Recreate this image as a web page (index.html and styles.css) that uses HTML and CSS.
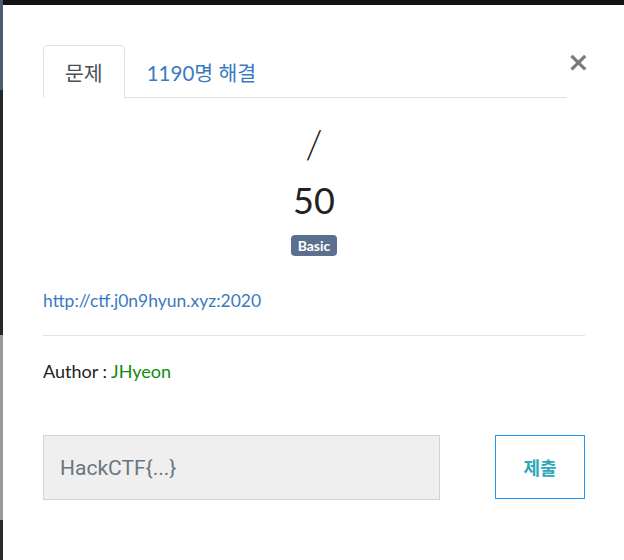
FILE: index.html
```html
<!DOCTYPE html>
<html lang="ko">
<head>
    <meta charset="UTF-8">
    <title>HackCTF</title>
    <link rel="stylesheet" href="styles.css">
</head>
<body>
    <div class="modal">
        <div class="modal-header">
            <ul class="nav-tabs">
                <li class="tab active">문제</li>
                <li class="tab">1190명 해결</li>
            </ul>
            <button class="close">&times;</button>
        </div>

        <div class="challenge">
            <h2 class="name">/</h2>
            <h3 class="value">50</h3>
            <span class="badge">Basic</span>
        </div>

        <div class="desc">
            <a href="#">http://ctf.j0n9hyun.xyz:2020</a>
        </div>
        <hr>
        <p class="author">Author : <span>JHyeon</span></p>

        <div class="submit-row">
            <input type="text" class="flag-input" placeholder="HackCTF{...}">
            <button class="submit">제출</button>
        </div>
    </div>
</body>
</html>
```

FILE: styles.css
```css
body {
    margin: 0;
    background: linear-gradient(#4a5b70 0, #4a5b70 90px, #23282d 90px, #23282d 335px, #9a9a9a 335px, #9a9a9a 520px, #2a2a2a 520px);
    font-family: Lato, "Noto Sans CJK KR", sans-serif;
    overflow: hidden;
}

.modal {
    margin: 5px 0 0 3px;
    height: 555px;
    background: #fff;
    padding: 40px 39px 0 40px;
    box-sizing: border-box;
    box-shadow: 0 -5px 0 #0f1316;
}

.modal-header {
    display: flex;
    align-items: flex-start;
}

.nav-tabs {
    flex: 1;
    display: flex;
    margin: 0;
    padding: 0;
    list-style: none;
    border-bottom: 1px solid #dee2e6;
}

.tab {
    padding: 0 21px;
    height: 51px;
    line-height: 54px;
    font-size: 20.5px;
    color: #3a7bbf;
    border: 1px solid transparent;
    border-bottom: 0;
    border-radius: 5px 5px 0 0;
    margin-bottom: -1px;
}

.tab.active {
    color: #495057;
    background: #fff;
    border-color: #dee2e6;
    height: 52px;
}

.close {
    background: none;
    border: none;
    padding: 0;
    margin: 5px 0 0 0;
    width: 18px;
    font-size: 27px;
    line-height: 24px;
    font-weight: bold;
    color: #7a7a7a;
    font-family: "DejaVu Sans", sans-serif;
}

.challenge {
    text-align: center;
    color: #222;
}

.name {
    margin: 25px 0 0;
    font-size: 40px;
    font-weight: 300;
    line-height: 42px;
}

.value {
    margin: 15px 0 0;
    font-size: 36px;
    font-weight: normal;
    line-height: 40px;
}

.badge {
    display: inline-block;
    margin-top: 15px;
    padding: 0 7px;
    height: 21px;
    line-height: 21px;
    font-size: 14px;
    font-weight: bold;
    color: #fff;
    background: #5b6f8e;
    border-radius: 4px;
}

.desc {
    margin-top: 34px;
    font-size: 17.5px;
}

.desc a {
    color: #3a7bbf;
    text-decoration: none;
}

hr {
    margin: 24px 0 0;
    border: 0;
    border-top: 1px solid #e2e2e2;
}

.author {
    margin: 24px 0 0;
    font-size: 18px;
    color: #222;
}

.author span {
    color: #118a11;
}

.submit-row {
    display: flex;
    justify-content: space-between;
    margin-top: 53px;
}

.flag-input {
    width: 397px;
    height: 65px;
    box-sizing: border-box;
    background: #efefef;
    border: 1px solid #ced4da;
    padding: 0 16px;
    font-family: Roboto, sans-serif;
    font-size: 21px;
    color: #495057;
    outline: none;
}

.flag-input::placeholder {
    color: #6c757d;
}

.submit {
    width: 90px;
    height: 64px;
    background: #fff;
    border: 1px solid #2196f3;
    color: #2ea7bd;
    font-family: "Noto Sans CJK KR", sans-serif;
    font-weight: bold;
    font-size: 18px;
}
```
